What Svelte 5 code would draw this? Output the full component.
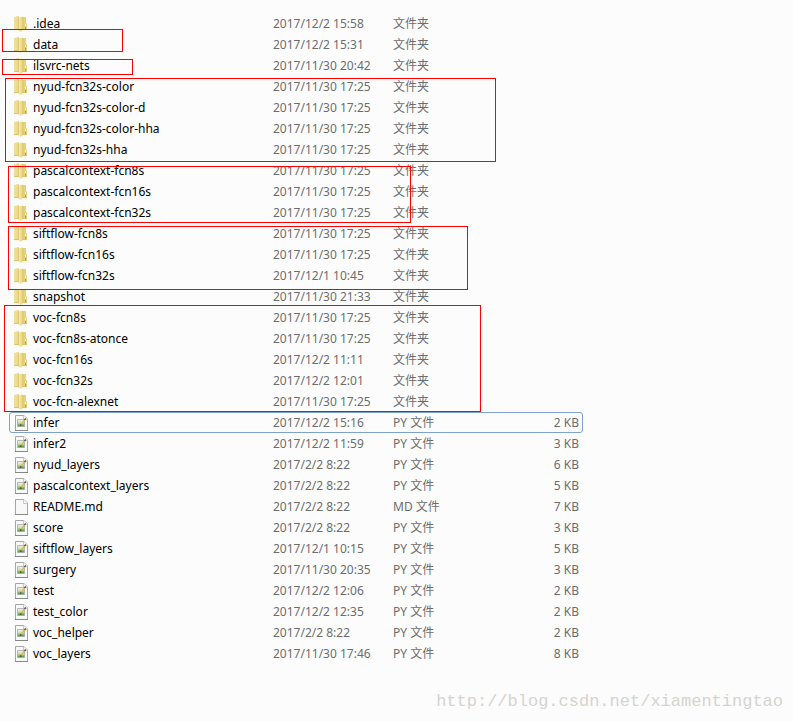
<script>
    const FOLDER = "文件夹";
    const PY = "PY 文件";

    const files = [
        { name: ".idea", date: "2017/12/2 15:58", type: FOLDER },
        { name: "data", date: "2017/12/2 15:31", type: FOLDER },
        { name: "ilsvrc-nets", date: "2017/11/30 20:42", type: FOLDER },
        { name: "nyud-fcn32s-color", date: "2017/11/30 17:25", type: FOLDER },
        { name: "nyud-fcn32s-color-d", date: "2017/11/30 17:25", type: FOLDER },
        { name: "nyud-fcn32s-color-hha", date: "2017/11/30 17:25", type: FOLDER },
        { name: "nyud-fcn32s-hha", date: "2017/11/30 17:25", type: FOLDER },
        { name: "pascalcontext-fcn8s", date: "2017/11/30 17:25", type: FOLDER },
        { name: "pascalcontext-fcn16s", date: "2017/11/30 17:25", type: FOLDER },
        { name: "pascalcontext-fcn32s", date: "2017/11/30 17:25", type: FOLDER },
        { name: "siftflow-fcn8s", date: "2017/11/30 17:25", type: FOLDER },
        { name: "siftflow-fcn16s", date: "2017/11/30 17:25", type: FOLDER },
        { name: "siftflow-fcn32s", date: "2017/12/1 10:45", type: FOLDER },
        { name: "snapshot", date: "2017/11/30 21:33", type: FOLDER },
        { name: "voc-fcn8s", date: "2017/11/30 17:25", type: FOLDER },
        { name: "voc-fcn8s-atonce", date: "2017/11/30 17:25", type: FOLDER },
        { name: "voc-fcn16s", date: "2017/12/2 11:11", type: FOLDER },
        { name: "voc-fcn32s", date: "2017/12/2 12:01", type: FOLDER },
        { name: "voc-fcn-alexnet", date: "2017/11/30 17:25", type: FOLDER },
        { name: "infer", date: "2017/12/2 15:16", type: PY, size: "2 KB" },
        { name: "infer2", date: "2017/12/2 11:59", type: PY, size: "3 KB" },
        { name: "nyud_layers", date: "2017/2/2 8:22", type: PY, size: "6 KB" },
        { name: "pascalcontext_layers", date: "2017/2/2 8:22", type: PY, size: "5 KB" },
        { name: "README.md", date: "2017/2/2 8:22", type: "MD 文件", size: "7 KB" },
        { name: "score", date: "2017/2/2 8:22", type: PY, size: "3 KB" },
        { name: "siftflow_layers", date: "2017/12/1 10:15", type: PY, size: "5 KB" },
        { name: "surgery", date: "2017/11/30 20:35", type: PY, size: "3 KB" },
        { name: "test", date: "2017/12/2 12:06", type: PY, size: "2 KB" },
        { name: "test_color", date: "2017/12/2 12:35", type: PY, size: "2 KB" },
        { name: "voc_helper", date: "2017/2/2 8:22", type: PY, size: "2 KB" },
        { name: "voc_layers", date: "2017/11/30 17:46", type: PY, size: "8 KB" },
    ];

    // Red marks drawn over the list
    const marks = [
        { x: 2, y: 29, w: 121, h: 23 },
        { x: 2, y: 59, w: 131, h: 16 },
        { x: 5, y: 78, w: 491, h: 84 },
        { x: 8, y: 166, w: 403, h: 57 },
        { x: 8, y: 226, w: 460, h: 64 },
        { x: 4, y: 305, w: 477, h: 107 },
    ];

    let focused = "infer";
</script>

<svg class="defs" width="0" height="0" aria-hidden="true">
    <defs>
        <linearGradient id="folder-back" x1="0" x2="1" y1="0" y2="0">
            <stop offset="0" stop-color="#f0e29c" />
            <stop offset="1" stop-color="#e8d584" />
        </linearGradient>
        <linearGradient id="folder-front" x1="0" x2="1" y1="0" y2="0">
            <stop offset="0" stop-color="#d6bc5e" />
            <stop offset="0.3" stop-color="#f3e6a6" />
            <stop offset="1" stop-color="#e6cf78" />
        </linearGradient>
        <linearGradient id="picture" x1="0" x2="0" y1="0" y2="1">
            <stop offset="0" stop-color="#eef3f6" />
            <stop offset="0.45" stop-color="#cfe0b4" />
            <stop offset="1" stop-color="#3c9428" />
        </linearGradient>
    </defs>
</svg>

<main class="explorer">
    <table aria-label="文件">
        <colgroup>
            <col class="col-name" />
            <col class="col-date" />
            <col class="col-type" />
            <col />
        </colgroup>
        <tbody>
            {#each files as file (file.name)}
                <tr class:focused={file.name === focused} on:click={() => (focused = file.name)}>
                    <td>
                        <div class="name">
                            <svg class="icon" viewBox="0 0 16 16" aria-hidden="true">
                                {#if file.type === FOLDER}
                                    <path d="M1 1 6 0v14H1z" fill="url(#folder-back)" />
                                    <path d="M9 1h4v6l1 .5V14H9z" fill="#e7d27c" />
                                    <path d="M5 1.500 10 .5V14l-2.500 2L5 14z" fill="url(#folder-front)" />
                                    <path d="M10 1v13" stroke="#d0b557" stroke-width="0.500" />
                                    <path d="M1 13.600h4M10 13.600h4" stroke="#d6bd66" stroke-width="0.800" />
                                    <path d="M12 8h1v3h-1z" fill="#fff" />
                                    <path d="M12 10.500h1V13h-1z" fill="#5cabd4" />
                                {:else}
                                    <path d="M2.500.5h8.500l3.500 3.500v11.500h-12z" fill="#f8f8f8" stroke="#a5a5a5" />
                                    <path d="M2 15.500h13" stroke="#888" />
                                    <path d="M10.500.5v4h4" fill="#fff" stroke="#bbb" stroke-width="0.800" />
                                    {#if file.type === PY}
                                        <path d="M4.500 4.500h7v7h-7z" fill="url(#picture)" stroke="#a2a9ac" stroke-width="0.800" />
                                        <path d="m8 9.500 3.500-4.500" stroke="#e9b73b" stroke-width="1.500" />
                                        <path d="m11.500 5 1.200-1.600" stroke="#555" stroke-width="1.500" />
                                        <path d="m7 11 .5-2 1.500 1z" fill="#2e3e21" />
                                    {/if}
                                {/if}
                            </svg>
                            <span>{file.name}</span>
                        </div>
                    </td>
                    <td>{file.date}</td>
                    <td>{file.type}</td>
                    <td class="size">{file.size ?? ""}</td>
                </tr>
            {/each}
        </tbody>
    </table>

    {#each marks as mark}
        <div
            class="mark"
            style="left: {mark.x}px; top: {mark.y}px; width: {mark.w}px; height: {mark.h}px"
        ></div>
    {/each}

    <footer>http://blog.csdn.net/xiamentingtao</footer>
</main>

<style>
    :global(body) {
        margin: 0;
        background: #fcfcfc;
    }

    .defs {
        position: absolute;
    }

    .explorer {
        position: relative;
        padding: 13px 10px 8px 9px;
        font-family: "Noto Sans", "Noto Sans CJK SC", sans-serif;
        font-size: 12px;
        line-height: 20px;
        color: #6d6d6d;
    }

    table {
        width: 100%;
        max-width: 574px;
        table-layout: fixed;
        border-collapse: collapse;
    }

    .col-name {
        width: 264px;
    }

    .col-date,
    .col-type {
        width: 120px;
    }

    tr {
        height: 21px;
        cursor: default;
    }

    tr.focused {
        outline: 1px solid #7da2ce;
        outline-offset: -1px;
        border-radius: 3px;
    }

    td {
        padding: 0;
        white-space: nowrap;
    }

    .name {
        display: flex;
        align-items: center;
        gap: 4px;
        padding-left: 4px;
        color: #000;
    }

    .icon {
        flex: none;
        width: 16px;
        height: 16px;
    }

    .size {
        padding-right: 4px;
        text-align: right;
    }

    .mark {
        position: absolute;
        box-sizing: border-box;
        border: 1px solid #f00;
        pointer-events: none;
    }

    footer {
        margin-top: 28px;
        font-family: "Liberation Mono", monospace;
        font-size: 17px;
        text-align: right;
        color: #d4d4cf;
    }
</style>
